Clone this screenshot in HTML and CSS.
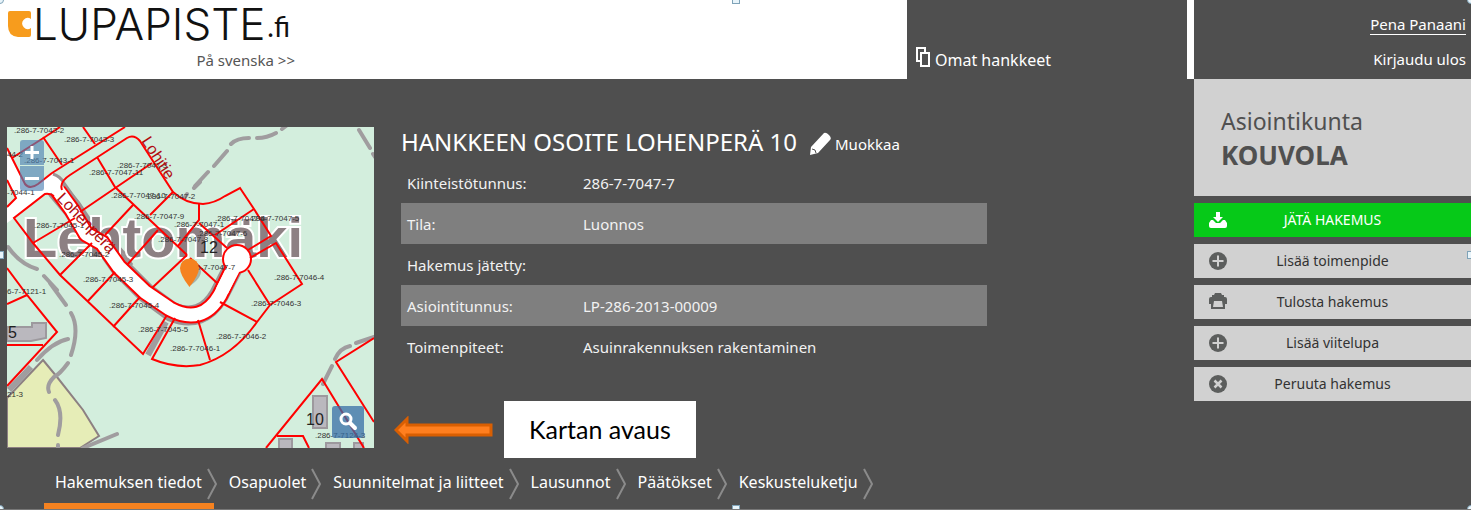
FILE: index.html
```html
<!DOCTYPE html>
<html lang="fi">
<head>
<meta charset="utf-8">
<title>Lupapiste.fi</title>
<link rel="stylesheet" href="styles.css">
</head>
<body>
<div class="page">
<header class="top">
  <div class="brand">
    <a class="logo" href="#" aria-label="Lupapiste.fi">
      <svg class="logo-mark" viewBox="0 0 23 26" aria-hidden="true"><path fill="#f79c1d" d="M2 0H21Q23 0 23 2V8A5.500 5.500 0 1 0 23 17V24Q23 26 21 26H10Q0 25 0 15V2Q0 0 2 0Z"/></svg>
      <span class="logo-name">LUPAPISTE</span><span class="logo-fi">.fi</span>
    </a>
    <a class="lang" href="#">På svenska &gt;&gt;</a>
  </div>
  <nav class="own">
    <a href="#"><svg class="docs" viewBox="0 0 16 22" aria-hidden="true"><g fill="#4f4f4f" stroke="#fff" stroke-width="2"><path d="M2 2H10V15H2Z"/><path d="M6 7H14V20H6Z"/></g></svg>Omat hankkeet</a>
  </nav>
  <div class="user">
    <a class="user-name" href="#">Pena Panaani</a>
    <a href="#">Kirjaudu ulos</a>
  </div>
</header>
<div class="content">
<main class="project">
  <div class="map">
    <svg class="map-art" viewBox="7 127 367 321" preserveAspectRatio="xMidYMid slice" role="img" aria-label="Kartta">
      <rect x="7" y="127" width="367" height="321" fill="#d3eedd"/>
      <path d="M43 360L57 377L83 410L99 436L80 448H7V398Z" fill="#e6edb7" stroke="#8d8082" stroke-width="2"/>
      <g fill="none" stroke="#a09d9f" stroke-width="4" stroke-linecap="round">
        <path d="M195 186L208 172M214 166L227 151M231 144Q237 138 249 138M257 138Q267 138 276 133M282 129L286 126M359 130L370 148M373 154L375 157M185 197L187 194M194 188L200 182"/>
        <path d="M8 247Q20 264 37 269M44 276L57 290M50 283L66 305M71 313Q80 328 71 355M68 363Q60 374 54 377Q46 385 49 392M55 400Q64 412 58 435M58 445V448M68 339Q53 342 37 360M117 434L83 448M323 384L332 366M335 359Q340 348 350 346M356 343L374 337"/>
        <path d="M31 367L9 390M166 322L148 355" stroke-width="6" stroke-linecap="butt"/>
      </g>
      <g fill="#bab8be" stroke="#9d999e" stroke-width="2">
        <path d="M7 327H32V323H46V338L31 341H7Z"/><path d="M313 396h14v32h-14z"/><path d="M279 439h13v12h-13zM326 443h14v9h-14zM354 443h9v8h-9z"/>
      </g>
      <path d="M7 148L17 168L25 184Q30 190 38 184L53 173L64 184L62 194L53 196Q49 193 45 194L14 218L7 223V207L16 198L7 180Z" fill="#fff"/>
      <path d="M53 174Q60 176 64 183L81 207L92 227L108 235L124 253L132 265" fill="none" stroke="#9c9294" stroke-width="3"/>
      <path d="M56 189L72 208L90 235L104 244L120 267L146 293L172 312Q202 324 219 295L238 258" fill="none" stroke="#9c9294" stroke-width="20" stroke-linejoin="round"/>
      <g class="place"><text x="23" y="257">Lehtomäki</text></g>
      <g fill="none" stroke-linejoin="round">
        <path d="M58 191L72 210L86 234L102 243L119 267L145 292L170 309Q202 326 220 295L238 258" stroke="red" stroke-width="17"/>
        <path d="M54 185L72 210L86 234L102 243L119 267L145 292L170 309Q202 326 220 295L238 258" stroke="#fff" stroke-width="13"/>
        <circle cx="237" cy="259" r="14" fill="#fff" stroke="red" stroke-width="2"/>
        <path d="M237 262L222 291" stroke="#fff" stroke-width="13"/>
      </g>
      <g class="parcel">
        <path d="M12 158L45 137L60 127M43 137L62 165M83 127L95 144M52 173L125 127M7 148L17 168L25 184Q30 190 38 184L52 173M7 180L16 198L7 207"/>
        <path d="M62 190Q59 182 70 175L127 138Q134 134 140 141L173 192Q186 204 203 204Q215 203 225 196L240 188L254 209L271 236L248 250"/>
        <path d="M97 157L115 187L187 255M80 212L152 163M133 205L105 235M158 230L127 265M173 192L150 215M199 204V220L178 246M187 255L152 288"/>
        <path d="M54 196Q49 193 45 194L14 218L33 243L60 275L143 354L167 315M33 243L75 218M60 275L92 243M115 272L87 302M140 297L113 327"/>
        <path d="M175 318L152 359Q176 369 200 365Q233 356 257 322L270 305L248 270M270 305L302 284L276 243L250 258M220 302L257 322M198 320L210 360M215 235L254 209M199 223L227 248M190 258L217 283"/>
        <path d="M7 268L27 295L57 332L7 386M7 304L27 295M7 345H43M266 448L322 379L364 448M277 436H303L309 448M374 338L336 362L374 422"/>
      </g>
      <g class="ids">
        <text x="14" y="133">.286-7-7043-2</text><text x="64" y="142">.286-7-7043-3</text><text x="24" y="163">.286-7-7043-1</text><text x="7" y="157">44-2</text><text x="7" y="195">-7044-1</text>
        <text x="89" y="175">.286-7-7047-11</text><text x="117" y="168">.286-7-7047-3</text><text x="111" y="198">.286-7-7047-10</text><text x="145" y="199">.286-7-7047-2</text><text x="134" y="219">.286-7-7047-9</text><text x="174" y="227">.286-7-7047-1</text><text x="158" y="242">.286-7-7047-8</text>
        <text x="34" y="228">.286-7-7045-1</text><text x="59" y="257">.286-7-7045-2</text><text x="83" y="282">.286-7-7045-3</text><text x="109" y="308">.286-7-7045-4</text><text x="138" y="332">.286-7-7045-5</text><text x="170" y="351">.286-7-7046-1</text>
        <text x="216" y="339">.286-7-7046-2</text><text x="251" y="306">.286-7-7046-3</text><text x="274" y="280">.286-7-7046-4</text><text x="249" y="221">.286-7-7047-5</text><text x="215" y="221">.286-7-7047-4</text><text x="197" y="236">.286-7-7047-6</text><text x="185" y="270">.286-7-7047-7</text>
        <text x="7" y="294">6-7-7121-1</text><text x="7" y="397">21-3</text><text x="315" y="438">.286-7-7124-3</text>
      </g>
      <g class="nums"><text x="8" y="338">5</text><text x="200" y="253">12</text><text x="306" y="425">10</text></g>
      <g class="streets"><text transform="translate(141 141) rotate(57)">Lohitie</text><text transform="translate(56 199) rotate(46)">Lohenperä</text></g>
      <path d="M191 285Q204 276 200 267L190 276Z" fill="#777" opacity=".5"/>
      <path d="M189.500 287Q180 275 180 268A9.500 9.500 0 0 1 199 268Q199 275 189.500 287Z" fill="#f58220"/>
    </svg>
    <div class="map-zoom">
      <button type="button" aria-label="Lähennä"><svg viewBox="0 0 24 25"><path d="M5 12.500H19M12 6V19" stroke="#fff" stroke-width="3"/></svg></button>
      <button type="button" aria-label="Loitonna"><svg viewBox="0 0 24 25"><path d="M5 12.500H19" stroke="#fff" stroke-width="3"/></svg></button>
    </div>
    <button class="map-open" type="button" aria-label="Avaa kartta"><svg viewBox="0 0 32 32"><circle cx="14" cy="13" r="5" fill="none" stroke="#fff" stroke-width="3"/><path d="M18 17L23 22" stroke="#fff" stroke-width="4" stroke-linecap="round"/></svg></button>
  </div>
  <section class="details">
    <div class="heading">
      <h1>HANKKEEN OSOITE LOHENPERÄ 10</h1>
      <a class="edit" href="#"><svg viewBox="0 0 22 24" aria-hidden="true"><path fill="#fff" d="M1 23L2 15L15 1Q17 0 20 3Q23 6 21 8L9 21Z"/><path d="M3 17L6 18L7 21" fill="none" stroke="#4f4f4f"/></svg>Muokkaa</a>
    </div>
    <table class="facts">
      <tr><th scope="row">Kiinteistötunnus:</th><td>286-7-7047-7</td></tr>
      <tr><th scope="row">Tila:</th><td>Luonnos</td></tr>
      <tr><th scope="row">Hakemus jätetty:</th><td></td></tr>
      <tr><th scope="row">Asiointitunnus:</th><td>LP-286-2013-00009</td></tr>
      <tr><th scope="row">Toimenpiteet:</th><td>Asuinrakennuksen rakentaminen</td></tr>
    </table>
    <div class="callout">
      <svg viewBox="0 0 99 28" aria-hidden="true"><path d="M2 14L13 3V9H97V19H13V25Z" fill="#ff7f1f" stroke="#d95f02" stroke-width="3"/></svg>
      <p>Kartan avaus</p>
    </div>
  </section>
</main>
<aside class="side">
  <div class="town"><span>Asiointikunta</span><strong>KOUVOLA</strong></div>
  <button class="action submit" type="button"><svg viewBox="0 0 20 20" aria-hidden="true"><path fill="#fff" d="M8 2H12V7H15L10 12L5 7H8ZM3 10H5L8 13H12L15 10H17L19 13V16Q19 18 17 18H3Q1 18 1 16V13Z"/></svg><span>JÄTÄ HAKEMUS</span></button>
  <button class="action" type="button"><svg viewBox="0 0 20 20" aria-hidden="true"><circle cx="10" cy="10" r="9" fill="#5c5e5d"/><path d="M4.500 10H15.500M10 4.500V15.500" stroke="#d1d1d1" stroke-width="2"/></svg><span>Lisää toimenpide</span></button>
  <button class="action" type="button"><svg viewBox="0 0 20 20" aria-hidden="true"><path fill="#5c5e5d" d="M7 1H13L14 3H16V5H4V3H6ZM3 5H17Q19 5 19 7V12H17V17H3V12H1V7Q1 5 3 5Z"/><path d="M6 9H14L15 15H5Z" fill="#d1d1d1"/></svg><span>Tulosta hakemus</span></button>
  <button class="action" type="button"><svg viewBox="0 0 20 20" aria-hidden="true"><circle cx="10" cy="10" r="9" fill="#5c5e5d"/><path d="M4.500 10H15.500M10 4.500V15.500" stroke="#d1d1d1" stroke-width="2"/></svg><span>Lisää viitelupa</span></button>
  <button class="action" type="button"><svg viewBox="0 0 20 20" aria-hidden="true"><circle cx="10" cy="10" r="9" fill="#5c5e5d"/><path d="M6.500 6.500L13.500 13.500M13.500 6.500L6.500 13.500" stroke="#d1d1d1" stroke-width="2.500"/></svg><span>Peruuta hakemus</span></button>
</aside>
</div>
<nav class="steps">
  <a class="current" href="#">Hakemuksen tiedot</a>
  <svg viewBox="0 0 10 32" aria-hidden="true"><path d="M1 1L9 16L1 31"/></svg>
  <a href="#">Osapuolet</a>
  <svg viewBox="0 0 10 32" aria-hidden="true"><path d="M1 1L9 16L1 31"/></svg>
  <a href="#">Suunnitelmat ja liitteet</a>
  <svg viewBox="0 0 10 32" aria-hidden="true"><path d="M1 1L9 16L1 31"/></svg>
  <a href="#">Lausunnot</a>
  <svg viewBox="0 0 10 32" aria-hidden="true"><path d="M1 1L9 16L1 31"/></svg>
  <a href="#">Päätökset</a>
  <svg viewBox="0 0 10 32" aria-hidden="true"><path d="M1 1L9 16L1 31"/></svg>
  <a href="#">Keskusteluketju</a>
  <svg viewBox="0 0 10 32" aria-hidden="true"><path d="M1 1L9 16L1 31"/></svg>
</nav>
<i class="grip round g-nw"></i><i class="grip g-n"></i><i class="grip round g-ne"></i><i class="grip g-w"></i><i class="grip g-e"></i><i class="grip round g-sw"></i><i class="grip g-s"></i><i class="grip round g-se"></i>
</div>
</body>
</html>
```
FILE: styles.css
```css
* { box-sizing: border-box; }
body { margin: 0; background: #4f4f4f; color: #fff; font: 15px/20px "Noto Sans", "Open Sans", sans-serif; }
a { color: inherit; text-decoration: none; }
svg { display: block; flex: none; }
button { border: 0; padding: 0; font: inherit; cursor: pointer; }
.page { position: relative; overflow: hidden; border-bottom: 1px solid #777; }

.top { display: grid; grid-template-columns: 1fr 280px 284px; height: 79px; }
.brand { background: #fff; color: #555; padding: 0 8px; }
.logo { display: flex; align-items: center; gap: 2px; height: 48px; color: #111; }
.logo-mark { width: 23px; height: 26px; }
.logo-name { font: 300 44px/48px Inter, sans-serif; }
.logo-fi { font: 28px/28px Lato, sans-serif; padding-top: 4px; }
.lang { display: block; width: 287px; text-align: right; line-height: 24px; }
.own { display: flex; align-items: end; padding: 0 8px 9px; font-size: 16px; }
.own a { display: flex; align-items: end; gap: 4px; }
.docs { width: 16px; height: 22px; margin-bottom: 2px; }
.user { border-left: 7px solid #fff; display: flex; flex-direction: column; align-items: flex-end; gap: 14px; padding: 15px 5px 0; }
.user-name { border-bottom: 1px solid #fff; line-height: 19px; }

.content { display: grid; grid-template-columns: 1fr 277px; }
.project { display: flex; gap: 20px; padding: 48px 7px 0; }
.map { position: relative; flex: none; width: 367px; height: 321px; }
.map-art { width: 100%; height: 100%; }
.parcel { fill: none; stroke: #f00; stroke-width: 2; }
.place { font: bold 56px "Liberation Sans", sans-serif; fill: #8d8083; stroke: #fff; stroke-width: 4; paint-order: stroke; }
.ids { font: 8px "Liberation Sans", sans-serif; fill: #333; }
.nums { font: 16px "Liberation Sans", sans-serif; fill: #222; }
.streets { font: 16px "Liberation Sans", sans-serif; fill: #b00c10; }
.map-zoom { position: absolute; left: 13px; top: 13px; display: grid; gap: 1px; width: 24px; }
.map-zoom button { background: rgba(80, 130, 180, .65); height: 25px; }
.map-zoom button:first-child { border-radius: 3px 3px 0 0; }
.map-zoom button:last-child { border-radius: 0 0 3px 3px; }
.map-open { position: absolute; right: 10px; bottom: 10px; width: 32px; height: 32px; border-radius: 3px; background: rgba(55, 110, 165, .75); }

.details { flex: 0 1 593px; }
.heading { display: flex; align-items: center; gap: 12px; height: 35px; padding: 0 0 6px 7px; white-space: nowrap; }
h1 { margin: 0; font-size: 24px; line-height: 30px; font-weight: 400; }
.edit { display: flex; align-items: center; gap: 4px; padding-top: 4px; }
.edit svg { width: 22px; height: 24px; }
.facts { width: calc(100% - 7px); margin-left: 7px; border-collapse: collapse; color: #f2f2f2; }
.facts tr { height: 41px; }
.facts tr:nth-child(even) { background: #7f7f7f; }
.facts th { width: 176px; padding: 0 6px; text-align: left; font-weight: 400; }
.facts td { padding: 0 6px; }
.callout { display: flex; align-items: center; gap: 11px; margin-top: 34px; }
.callout svg { width: 99px; height: 28px; }
.callout p { margin: 0; padding: 16px 25px; background: #fff; color: #000; font: 25px/25px Lato, sans-serif; }

.side { display: flex; flex-direction: column; gap: 7px; }
.town { height: 117px; background: #d1d1d1; color: #505050; padding: 25px 27px; font-size: 23px; line-height: 34px; }
.town span, .town strong { display: block; }
.town strong { font-size: 26px; }
.action { display: grid; grid-template-columns: 20px 1fr 20px; align-items: center; height: 34px; padding: 0 14px; background: #d1d1d1; color: #333; font-size: 14px; }
.action svg { width: 20px; height: 20px; }
.submit { background: #06c918; color: #fff; }

.steps { display: flex; align-items: center; height: 51px; padding-left: 44px; font-size: 16px; gap: 12px; }
.steps a { line-height: 48px; height: 51px; white-space: nowrap; border-bottom: 6px solid transparent; }
.steps svg { width: 10px; height: 32px; fill: none; stroke: #8b8b8b; stroke-width: 2; margin-left: -7px; }
.steps .current { border-color: #f58220; padding: 0 12px 0 11px; margin-right: -12px; }

.grip { position: absolute; width: 8px; height: 8px; margin: -4px; background: #e8f4fa; border: 1px solid #7fa3b8; }
.round { border-radius: 50%; }
.g-nw { left: 0; top: 0; } .g-n { left: 50%; top: 0; } .g-ne { left: 100%; top: 0; }
.g-w { left: 0; top: 50%; } .g-e { left: 100%; top: 50%; }
.g-sw { left: 0; top: 100%; } .g-s { left: 50%; top: 100%; } .g-se { left: 100%; top: 100%; }
```
